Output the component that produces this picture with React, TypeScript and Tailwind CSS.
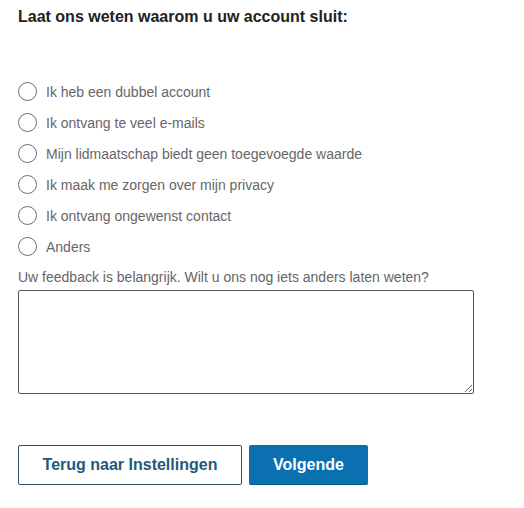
import React, { useState } from "react";

const reasons = [
  "Ik heb een dubbel account",
  "Ik ontvang te veel e-mails",
  "Mijn lidmaatschap biedt geen toegevoegde waarde",
  "Ik maak me zorgen over mijn privacy",
  "Ik ontvang ongewenst contact",
  "Anders",
];

const App = () => {
  const [choice, setChoice] = useState("");

  return (
    <div
      className="w-[524px] h-[508px] bg-white pl-[18px] pt-[6px]"
      style={{ fontFamily: '"Liberation Sans", Arial, sans-serif' }}
    >
      <h1 className="text-[16px] leading-[21px] font-bold text-[#222]">
        Laat ons weten waarom u uw account sluit:
      </h1>

      <ul className="mt-[49px]">
        {reasons.map((r) => (
          <li key={r} className="h-[31px] flex items-center">
            <button
              type="button"
              onClick={() => setChoice(r)}
              className="flex items-center gap-[9px]"
            >
              <span className="w-[19px] h-[19px] rounded-full border-[1.5px] border-[#707070] flex items-center justify-center">
                {choice === r && <span className="w-[9px] h-[9px] rounded-full bg-[#0073b1]" />}
              </span>
              <span className="text-[14px] leading-[20px] text-[#666]">{r}</span>
            </button>
          </li>
        ))}
      </ul>

      <label className="block mt-[5px] text-[14px] leading-[20px] text-[#666]">
        Uw feedback is belangrijk. Wilt u ons nog iets anders laten weten?
      </label>
      <textarea className="block mt-[3px] w-[456px] h-[104px] border border-[#555] rounded-[2px] bg-white outline-none p-2 text-[14px]" />

      <div className="mt-[51px] flex gap-[7px]">
        <button className="w-[224px] h-[40px] border border-[#2f4f5f] rounded-[2px] bg-white text-[16px] font-bold text-[#24587a]">
          Terug naar Instellingen
        </button>
        <button className="w-[119px] h-[40px] rounded-[2px] bg-[#0a70b0] border-b border-[#075a8e] text-[16px] font-bold text-white">
          Volgende
        </button>
      </div>
    </div>
  );
};

export default App;
